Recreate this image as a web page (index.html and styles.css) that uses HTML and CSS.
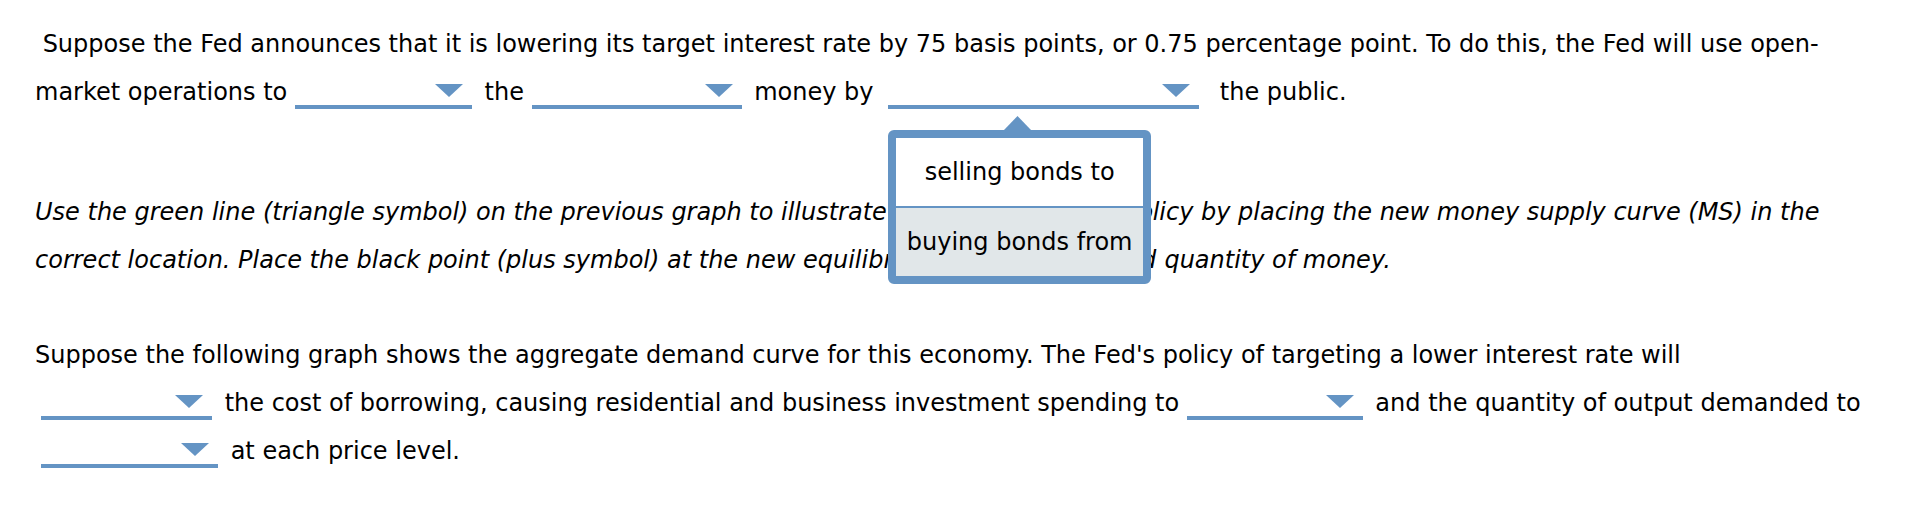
FILE: index.html
```html
<!DOCTYPE html>
<html lang="en">
<head>
  <meta charset="UTF-8">
  <title>Money supply question</title>
  <link rel="stylesheet" href="styles.css">
</head>
<body>
  <div class="question">

    <p class="q-first">&nbsp;Suppose the Fed announces that it is lowering its target interest rate by 75 basis points, or 0.75 percentage point. To do this, the Fed will use open-<br>market operations to <span class="dd dd-a"><svg class="dd-arrow" viewBox="0 0 28 13"><path d="M0 0H28L14 13Z"/></svg></span> the <span class="dd dd-b"><svg class="dd-arrow" viewBox="0 0 28 13"><path d="M0 0H28L14 13Z"/></svg></span> money by <span class="dd dd-c open"><svg class="dd-arrow" viewBox="0 0 28 13"><path d="M0 0H28L14 13Z"/></svg><span class="menu"><svg class="menu-caret" viewBox="0 0 27 14"><path d="M0 14L13.5 0L27 14Z"/></svg><span class="menu-item">selling bonds to</span><span class="menu-item hover">buying bonds from</span></span></span> the public.</p>

    <p class="q-graph">Use the green line (triangle symbol) on the previous graph to illustrate<span class="tight"> the Fed's monetary po</span>licy by placing the new money supply curve (MS) in the<br>correct location. Place the black point (plus symbol) at the new equilib<span class="loose">rium interest rate and</span> quantity of money.</p>

    <p class="q-ad">Suppose the following graph shows the aggregate demand curve for this economy. The Fed's policy of targeting a lower interest rate will<br><span class="dd dd-d dd-start"><svg class="dd-arrow" viewBox="0 0 28 13"><path d="M0 0H28L14 13Z"/></svg></span> the cost of borrowing, causing residential and business investment spending to <span class="dd dd-e"><svg class="dd-arrow" viewBox="0 0 28 13"><path d="M0 0H28L14 13Z"/></svg></span> and the quantity of output demanded to<br><span class="dd dd-f dd-start"><svg class="dd-arrow" viewBox="0 0 28 13"><path d="M0 0H28L14 13Z"/></svg></span> at each price level.</p>

  </div>
</body>
</html>
```

FILE: styles.css
```css
body {
  font-family: "DejaVu Sans", Verdana, sans-serif;
  font-size: 24px;
  color: #000;
  background: #fff;
  margin: 0;
  padding: 0;
}

.question {
  padding: 20px 0 0 35px;
}

.question p {
  margin: 0;
  line-height: 48px;
  white-space: nowrap;
}

.q-graph {
  font-style: italic;
  margin-top: 72px !important;
}

/* text under the open menu, spaced so the visible words line up */
.q-graph .tight {
  letter-spacing: -0.6px;
}

.q-graph .loose {
  letter-spacing: 0.4px;
}

.q-ad {
  margin-top: 47px !important;
}

/* dropdown blanks */
.dd {
  display: inline-block;
  position: relative;
  height: 30px;
  border-bottom: 4px solid #6494c4;
  box-sizing: border-box;
  vertical-align: -9px;
  margin-right: 5px;
  font-style: normal;
}

.dd-start {
  margin-left: 6px;
}

.dd-a { width: 177px; }
.dd-b { width: 210px; }
.dd-c { width: 311px; margin-left: 7px; margin-right: 13px; }
.dd-d { width: 171px; }
.dd-e { width: 176px; }
.dd-f { width: 177px; }

.dd-arrow {
  position: absolute;
  top: 5px;
  right: 9px;
  width: 28px;
  height: 13px;
  fill: #6494c4;
}

/* open menu */
.menu {
  display: block;
  position: absolute;
  top: 51px;
  left: 0;
  width: 263px;
  box-sizing: border-box;
  border: 8px solid #6494c4;
  border-radius: 6px;
  background: #fff;
  z-index: 10;
}

.menu-caret {
  position: absolute;
  top: -22px;
  left: 108px;
  width: 27px;
  height: 14px;
  fill: #6494c4;
}

.menu-item {
  display: block;
  height: 68px;
  line-height: 68px;
  text-align: center;
  white-space: nowrap;
}

.menu-item + .menu-item {
  border-top: 2px solid #6494c4;
}

.menu-item.hover {
  background: #e1e7e9;
}
```
